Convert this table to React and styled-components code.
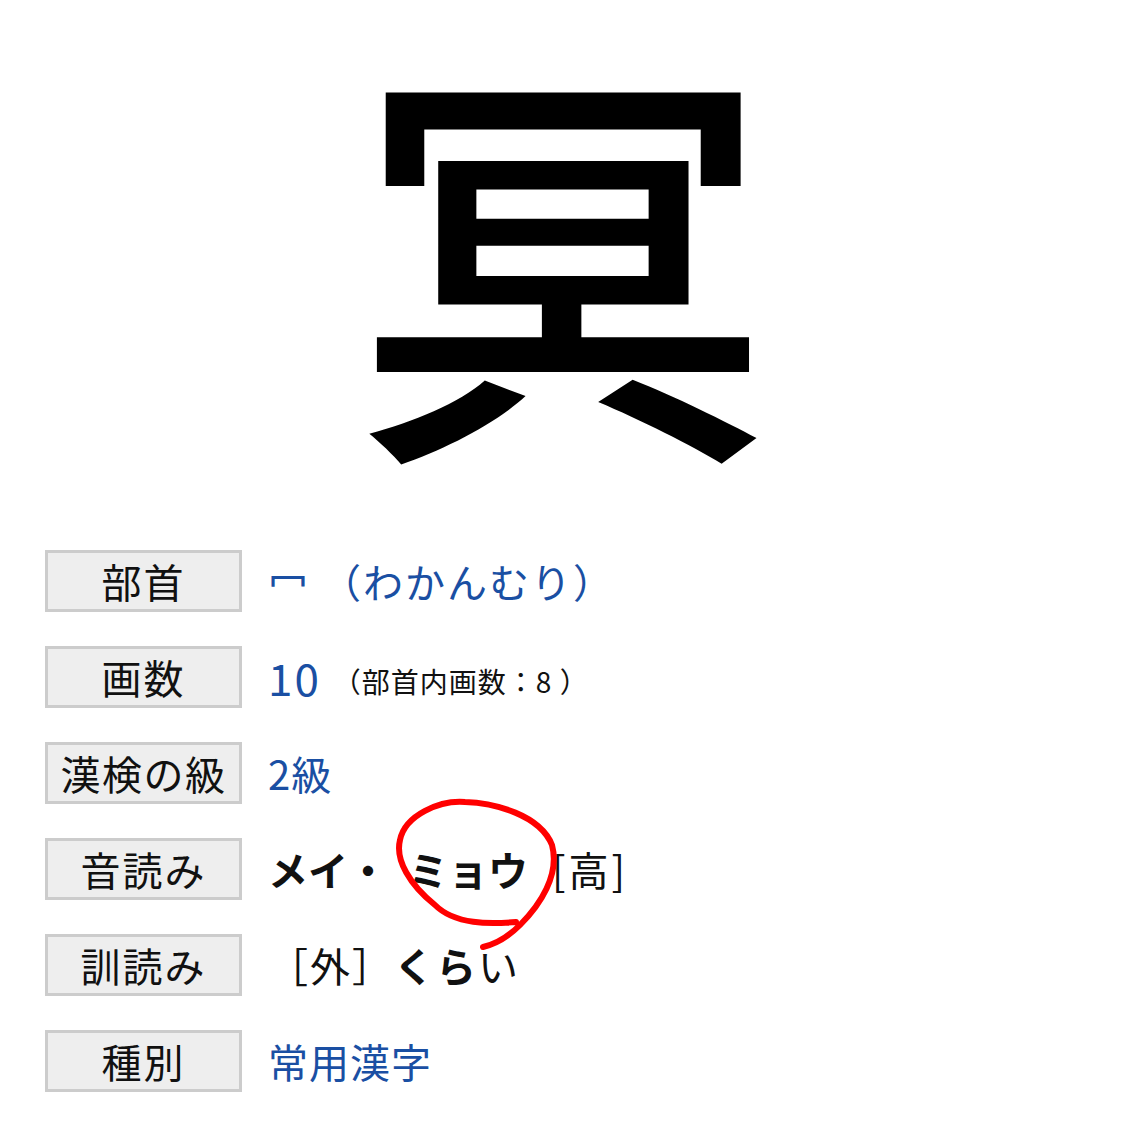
import React from 'react'
import styled, { createGlobalStyle } from "styled-components";

const GlobalStyle = createGlobalStyle`
  body {
    margin: 0;
    background: #fff;
    font-family: "Noto Sans CJK JP", "Noto Sans", sans-serif;
  }
`;

const Page = styled.div`
  position: relative;
  width: 1125px;
  height: 1129px;
  overflow: hidden;
`;

const Hero = styled.div`
  height: 550px;
  display: flex;
  justify-content: center;
  align-items: flex-start;
`;

const BigKanji = styled.div`
  font-size: 420px;
  line-height: 1.16;
  font-weight: 500;
  color: #000;
  margin-top: 2px;
`;

const Table = styled.div`
  display: grid;
  grid-template-columns: 197px 1fr;
  grid-auto-rows: 62px;
  row-gap: 34px;
  column-gap: 26px;
  padding-left: 45px;
`;

const Label = styled.div`
  box-sizing: border-box;
  border: 3px solid #cccccc;
  background: #eeeeee;
  display: flex;
  align-items: center;
  justify-content: center;
  font-size: 40px;
  font-weight: 400;
  color: #111;
  letter-spacing: ${p => (p.$tight ? "1.5px" : "2px")};
`;

const Value = styled.div`
  display: flex;
  align-items: center;
  font-size: 40px;
  letter-spacing: ${p => p.$spacing || "1px"};
  color: ${p => (p.$blue ? "#1a4fa3" : "#111")};
  white-space: pre;
`;

const Digits = styled.span`
  font-size: 44px;
  letter-spacing: 2px;
`;

const Small = styled.span`
  font-size: 28px;
  letter-spacing: 1px;
  color: #111;
  margin-left: 12px;
  padding-top: 8px;
`;

const Bold = styled.span`
  font-weight: 700;
  margin-left: ${p => p.$gap || "0"};
`;

const Note = styled.span`
  margin-left: 24px;
  letter-spacing: 3px;
`;

const Mark = styled.svg`
  position: absolute;
  left: 0;
  top: 0;
  pointer-events: none;
`;

export default function App() {
  return (
    <Page>
      <GlobalStyle />
      <Hero>
        <BigKanji>冥</BigKanji>
      </Hero>
      <Table>
        <Label>部首</Label>
        <Value $blue $spacing="2px">冖 （わかんむり）</Value>

        <Label>画数</Label>
        <Value $blue><Digits>10</Digits><Small>（部首内画数：8 ）</Small></Value>

        <Label $tight>漢検の級</Label>
        <Value $blue>2級</Value>

        <Label>音読み</Label>
        <Value $spacing="0"><Bold>メイ・</Bold><Bold $gap="20px">ミョウ</Bold><Note>[高]</Note></Value>

        <Label>訓読み</Label>
        <Value $spacing="2px">［外］<Bold>くら</Bold>い</Value>

        <Label>種別</Label>
        <Value $blue>常用漢字</Value>
      </Table>
      <Mark width="1125" height="1129">
        <path
          d="M516,922 C490,924 455,925 435,905 C410,885 395,860 400,840 C405,815 440,800 465,802 C495,803 540,815 552,845 C560,875 540,905 520,925 C505,940 492,945 483,947"
          fill="none"
          stroke="#ff0000"
          strokeWidth="6"
          strokeLinecap="round"
          strokeLinejoin="round"
        />
      </Mark>
    </Page>
  )
}
